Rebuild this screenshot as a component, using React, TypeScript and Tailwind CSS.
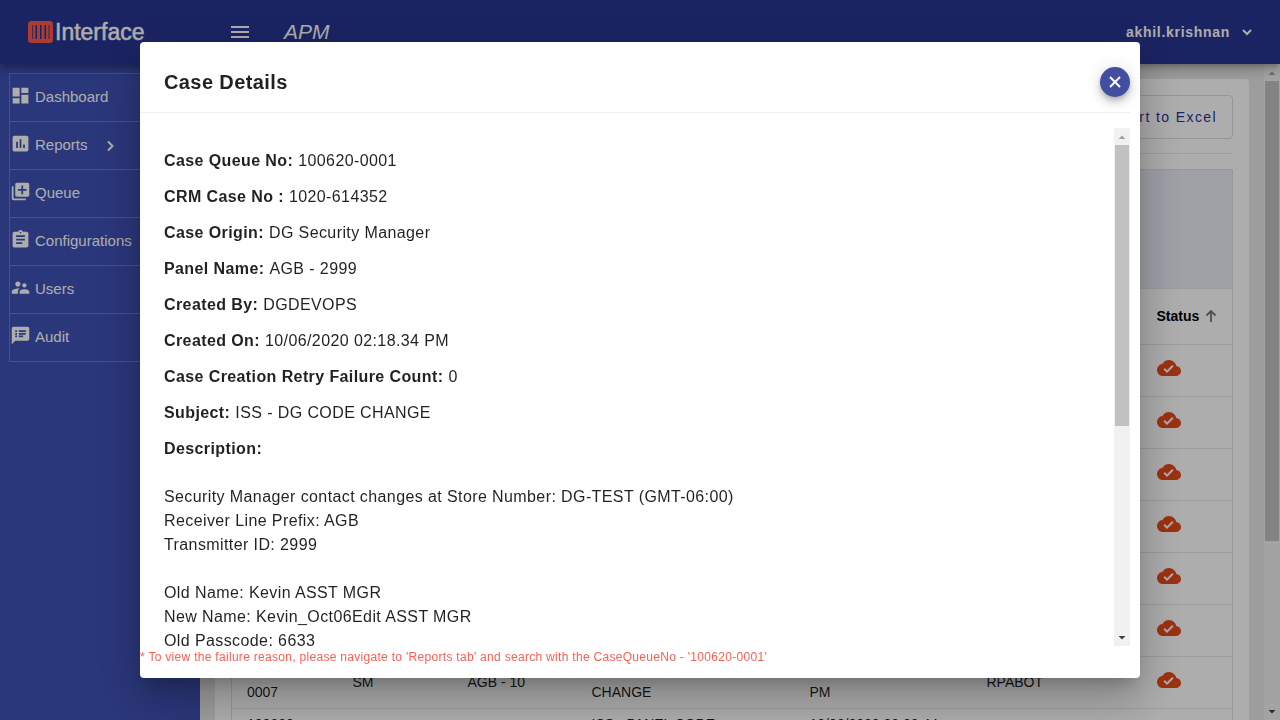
import React from 'react';
import {
  MdAssessment,
  MdAssignment,
  MdCloudDone,
  MdDashboard,
  MdLibraryAdd,
  MdMenu,
  MdSpeakerNotes,
  MdSupervisorAccount,
} from 'react-icons/md';
import type { IconType } from 'react-icons';

const navItems: { label: string; icon: IconType; expandable?: boolean }[] = [
  { label: 'Dashboard', icon: MdDashboard },
  { label: 'Reports', icon: MdAssessment, expandable: true },
  { label: 'Queue', icon: MdLibraryAdd },
  { label: 'Configurations', icon: MdAssignment },
  { label: 'Users', icon: MdSupervisorAccount },
  { label: 'Audit', icon: MdSpeakerNotes },
];

const emptyRow = ['', '', '', '', '', ''];
const rows: string[][] = [
  emptyRow,
  emptyRow,
  emptyRow,
  emptyRow,
  emptyRow,
  emptyRow,
  ['100620-0007', 'SM', 'AGB - 10', 'ISS - DG CODE CHANGE', '10/06/2020 02:20.10 PM', 'RPABOT'],
  ['100620-0008', 'SM', 'AGB - 10', 'ISS - PANEL CODE CHANGE', '10/06/2020 02:22.44 PM', 'RPABOT'],
];

const details: [string, string][] = [
  ['Case Queue No:', '100620-0001'],
  ['CRM Case No :', '1020-614352'],
  ['Case Origin:', 'DG Security Manager'],
  ['Panel Name:', 'AGB - 2999'],
  ['Created By:', 'DGDEVOPS'],
  ['Created On:', '10/06/2020 02:18.34 PM'],
  ['Case Creation Retry Failure Count:', '0'],
  ['Subject:', 'ISS - DG CODE CHANGE'],
  ['Description:', ''],
];

const description = `Security Manager contact changes at Store Number: DG-TEST (GMT-06:00)
Receiver Line Prefix: AGB
Transmitter ID: 2999

Old Name: Kevin ASST MGR
New Name: Kevin_Oct06Edit ASST MGR
Old Passcode: 6633`;

function Logo() {
  return (
    <svg width="120" height="26" viewBox="0 0 120 26" role="img" aria-label="Interface">
      <rect y="2" width="25" height="22" rx="3.5" fill="#ff5a4a" />
      <g stroke="#283593" fill="none">
        <path d="M4.7 6v14M21 6v14" strokeWidth="0.9" />
        <path d="M8.2 6v14M12.8 6v14M17.3 6v14" strokeWidth="1.6" />
      </g>
      <text x="27" y="21" fontSize="23" fill="#ffffff" stroke="#ffffff" strokeWidth="0.5">
        Interface
      </text>
    </svg>
  );
}

function StrokeIcon({ d, className }: { d: string; className?: string }) {
  return (
    <svg
      width="18"
      height="18"
      viewBox="0 0 18 18"
      fill="none"
      stroke="currentColor"
      strokeWidth="2"
      className={className}
      aria-hidden="true"
    >
      <path d={d} />
    </svg>
  );
}

function Scrollbar({ thumb }: { thumb: string }) {
  return (
    <div className="flex w-4 shrink-0 flex-col items-center bg-[#f1f1f1]" aria-hidden="true">
      <svg width="16" height="17" viewBox="0 0 16 17" className="shrink-0">
        <path d="M4.5 11h7L8 7.5z" fill="#a3a3a3" />
      </svg>
      <div className="flex w-full flex-1 flex-col items-center">
        <div className={'w-[14px] bg-[#c1c1c1] ' + thumb} />
      </div>
      <svg width="16" height="17" viewBox="0 0 16 17" className="shrink-0">
        <path d="M4.5 7h7L8 10.5z" fill="#404040" />
      </svg>
    </div>
  );
}

function Sidebar() {
  return (
    <nav className="w-[200px] shrink-0 bg-[#3f51b5] pt-[9px] pl-[9px]">
      <ul className="border-t border-l border-[#7f8bcb]/70">
        {navItems.map(({ label, icon: Icon, expandable }) => (
          <li key={label} className="border-b border-[#7f8bcb]/70">
            <a href="#" className="flex h-[47px] items-center text-[15px] text-white">
              <Icon size={21} className="mb-1 shrink-0" />
              <span className="ml-1">{label}</span>
              {expandable && <StrokeIcon d="M7 4.5l4.5 4.5L7 13.5" className="ml-[13px]" />}
            </a>
          </li>
        ))}
      </ul>
    </nav>
  );
}

function CaseTable() {
  return (
    <table className="w-full table-fixed border-collapse border border-[#e0e0e0] text-left text-sm text-black/90">
      <colgroup>
        <col className="w-[121px]" />
        <col className="w-[115px]" />
        <col className="w-[124px]" />
        <col className="w-[218px]" />
        <col className="w-[177px]" />
        <col className="w-[170px]" />
        <col />
      </colgroup>
      <thead>
        <tr className="h-[119px] bg-[#ebedf7]">
          <td colSpan={7} />
        </tr>
        <tr className="h-14 border-y border-[#e6e6e6]">
          <th colSpan={6} />
          <th className="px-0 pt-0 pb-0.5 font-bold text-black">
            <span className="flex items-center gap-1">
              Status
              <svg
                width="16"
                height="16"
                viewBox="0 0 16 16"
                fill="none"
                stroke="#757575"
                strokeWidth="1.8"
                aria-hidden="true"
              >
                <path d="M8 14V3.5M3.5 7.5L8 3l4.5 4.5" />
              </svg>
            </span>
          </th>
        </tr>
      </thead>
      <tbody>
        {rows.map((row, i) => (
          <tr key={i} className="h-[52px] border-b border-[#e6e6e6]">
            {row.map((cell, j) => (
              <td
                key={j}
                className={
                  j === 0 ? 'pt-0 pr-12 pb-0.5 pl-[15px]' : j === 3 ? 'pt-0 pr-20 pb-0.5' : 'pt-0 pr-10 pb-0.5'
                }
              >
                {cell}
              </td>
            ))}
            <td className="p-0">
              <MdCloudDone size={24} className="mb-1.5 text-[#e64a19]" />
            </td>
          </tr>
        ))}
      </tbody>
    </table>
  );
}

function CaseDialog() {
  return (
    <div className="fixed inset-0 z-20 flex items-center justify-center bg-black/32">
      <div
        role="dialog"
        aria-labelledby="case-title"
        className="w-full max-w-[1000px] rounded bg-white text-base tracking-wide text-black/87 shadow-[0_11px_15px_-7px_rgba(0,0,0,0.2),0_24px_38px_3px_rgba(0,0,0,0.14),0_9px_46px_8px_rgba(0,0,0,0.12)]"
      >
        <div className="pr-[10px]">
          <header className="flex items-center justify-between border-b border-[#eeeeee] pt-[25px] pb-[15px] pl-6">
            <h2 id="case-title" className="text-xl leading-[30px] font-bold">
              Case Details
            </h2>
            <button
              type="button"
              aria-label="Close"
              className="flex size-[30px] items-center justify-center rounded-full bg-[#424ea0] text-white shadow-[0_3px_5px_-1px_rgba(0,0,0,0.2),0_6px_10px_rgba(0,0,0,0.14),0_1px_18px_rgba(0,0,0,0.12)]"
            >
              <StrokeIcon d="M4 4l10 10M14 4L4 14" />
            </button>
          </header>
          <div className="mt-[15px] flex h-[72vh] overflow-hidden">
            <div className="min-w-0 flex-1 pt-[15px] pl-6">
              <dl>
                {details.map(([term, value]) => (
                  <div key={term} className="flex gap-[5px] py-[6px] leading-6">
                    <dt className="font-bold">{term}</dt>
                    <dd>{value}</dd>
                  </div>
                ))}
              </dl>
              <p className="mt-[18px] leading-6 whitespace-pre-line">{description}</p>
            </div>
            <Scrollbar thumb="h-[58%]" />
          </div>
        </div>
        <p className="pt-[3px] pb-[13px] text-xs leading-4 tracking-wide text-[#f44336]/85">
          * To view the failure reason, please navigate to 'Reports tab' and search with the CaseQueueNo - '100620-0001'
        </p>
      </div>
    </div>
  );
}

export default function App() {
  return (
    <div className="flex h-screen flex-col overflow-hidden font-['Liberation_Sans',Arial,sans-serif]">
      <header className="z-10 flex h-16 shrink-0 items-center bg-[#283593] pr-6 pl-7 text-white shadow-[0_3px_5px_-1px_rgba(0,0,0,0.2),0_6px_10px_rgba(0,0,0,0.14),0_1px_18px_rgba(0,0,0,0.12)]">
        <div className="w-[200px]">
          <Logo />
        </div>
        <button type="button" aria-label="Menu">
          <MdMenu size={24} />
        </button>
        <h1 className="ml-8 text-[21px] italic">APM</h1>
        <button type="button" className="ml-auto flex items-center gap-2 text-sm font-bold tracking-wider">
          akhil.krishnan
          <StrokeIcon d="M5 7l4 4 4-4" />
        </button>
      </header>
      <div className="flex min-h-0 flex-1">
        <Sidebar />
        <main className="min-w-0 flex-1 overflow-hidden bg-[#e8e8e8] p-[15px]">
          <section className="rounded bg-white p-4">
            <div className="flex justify-end border-b border-[#e8e8e8] pb-[14px]">
              <button
                type="button"
                className="h-11 rounded border border-[#dddddd] px-[15px] text-sm tracking-widest text-[#283593]"
              >
                Export to Excel
              </button>
            </div>
            <div className="mt-[15px]">
              <CaseTable />
            </div>
          </section>
        </main>
        <Scrollbar thumb="h-[74%]" />
      </div>
      <CaseDialog />
    </div>
  );
}
